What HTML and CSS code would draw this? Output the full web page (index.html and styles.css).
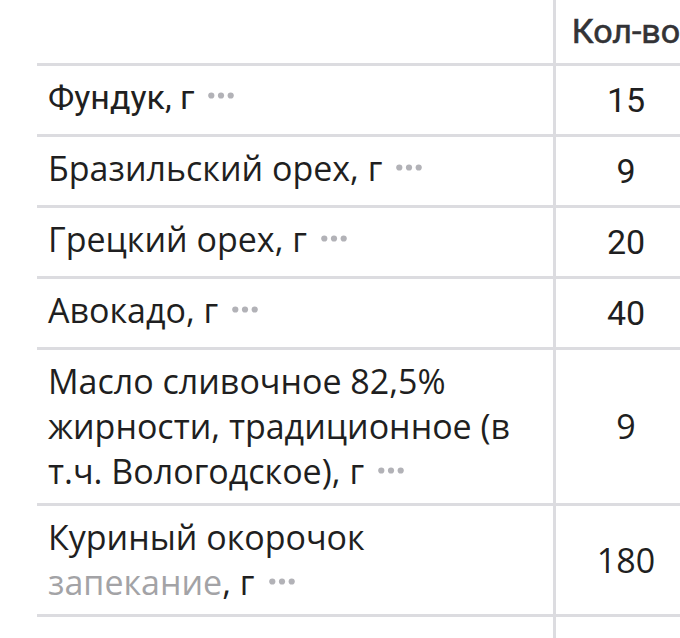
FILE: index.html
```html
<!DOCTYPE html>
<html lang="ru">
<head>
<meta charset="utf-8">
<link rel="stylesheet" href="styles.css">
</head>
<body>
<div class="table">
  <div class="row head">
    <div class="cell name"></div>
    <div class="cell qty hq">Кол-во</div>
  </div>
  <div class="row">
    <div class="cell name roboto">Фундук, <span class="nw">г<svg class="dots" viewBox="0 0 26 7" width="26" height="7"><circle cx="3.3" cy="3.5" r="3.1"/><circle cx="13" cy="3.5" r="3.1"/><circle cx="22.7" cy="3.5" r="3.1"/></svg></span></div>
    <div class="cell qty roboto">15</div>
  </div>
  <div class="row">
    <div class="cell name">Бразильский орех, <span class="nw">г<svg class="dots" viewBox="0 0 26 7" width="26" height="7"><circle cx="3.3" cy="3.5" r="3.1"/><circle cx="13" cy="3.5" r="3.1"/><circle cx="22.7" cy="3.5" r="3.1"/></svg></span></div>
    <div class="cell qty roboto">9</div>
  </div>
  <div class="row">
    <div class="cell name">Грецкий орех, <span class="nw">г<svg class="dots" viewBox="0 0 26 7" width="26" height="7"><circle cx="3.3" cy="3.5" r="3.1"/><circle cx="13" cy="3.5" r="3.1"/><circle cx="22.7" cy="3.5" r="3.1"/></svg></span></div>
    <div class="cell qty roboto">20</div>
  </div>
  <div class="row">
    <div class="cell name">Авокадо, <span class="nw">г<svg class="dots" viewBox="0 0 26 7" width="26" height="7"><circle cx="3.3" cy="3.5" r="3.1"/><circle cx="13" cy="3.5" r="3.1"/><circle cx="22.7" cy="3.5" r="3.1"/></svg></span></div>
    <div class="cell qty roboto">40</div>
  </div>
  <div class="row">
    <div class="cell name">Масло сливочное 82,5% жирности, традиционное (в т.ч. Вологодское), <span class="nw">г<svg class="dots" viewBox="0 0 26 7" width="26" height="7"><circle cx="3.3" cy="3.5" r="3.1"/><circle cx="13" cy="3.5" r="3.1"/><circle cx="22.7" cy="3.5" r="3.1"/></svg></span></div>
    <div class="cell qty">9</div>
  </div>
  <div class="row">
    <div class="cell name">Куриный окорочок<br><span class="muted">запекание</span>, <span class="nw">г<svg class="dots" viewBox="0 0 26 7" width="26" height="7"><circle cx="3.3" cy="3.5" r="3.1"/><circle cx="13" cy="3.5" r="3.1"/><circle cx="22.7" cy="3.5" r="3.1"/></svg></span></div>
    <div class="cell qty">180</div>
  </div>
  <div class="row">
    <div class="cell name"></div>
    <div class="cell qty"></div>
  </div>
</div>
</body>
</html>
```

FILE: styles.css
```css
html, body {
  margin: 0;
  padding: 0;
  background: #ffffff;
}
body {
  width: 680px;
  height: 638px;
  overflow: hidden;
  font-family: "Open Sans", "Noto Sans", sans-serif;
  font-size: 34px;
  line-height: 45px;
  color: #1f1f21;
}
.table {
  margin-left: 37px;
  width: 662px;
  display: flex;
  flex-direction: column;
}
.row {
  display: grid;
  grid-template-columns: 516px 143px;
  border-top: 3px solid #dcdce0;
}
.row.head {
  border-top: none;
  height: 63px;
}
.cell {
  box-sizing: border-box;
  min-height: 68px;
  padding: 9px 10px 9px 11px;
  display: flex;
  align-items: center;
}
.row.head .cell {
  min-height: 63px;
}
.cell.name {
  display: block;
  align-self: center;
}
.row:not(.head) .cell.name:empty {
  min-height: 68px;
}
.cell.qty {
  border-left: 3px solid #dcdce0;
  justify-content: center;
  padding-left: 0;
  padding-right: 0;
  align-self: stretch;
}
.roboto {
  font-family: Roboto, "Noto Sans", sans-serif;
}
.hq {
  font-family: Roboto, "Noto Sans", sans-serif;
  font-weight: 400;
  -webkit-text-stroke: 0.6px #333336;
  color: #333336;
  padding-top: 8px;
  justify-content: flex-start;
  padding-left: 17px;
  white-space: nowrap;
}
.muted {
  color: #a3a3a6;
}
.nw {
  white-space: nowrap;
}
.dots {
  display: inline-block;
  margin-left: 14px;
  vertical-align: 10px;
  fill: #b2b2b7;
}
```
